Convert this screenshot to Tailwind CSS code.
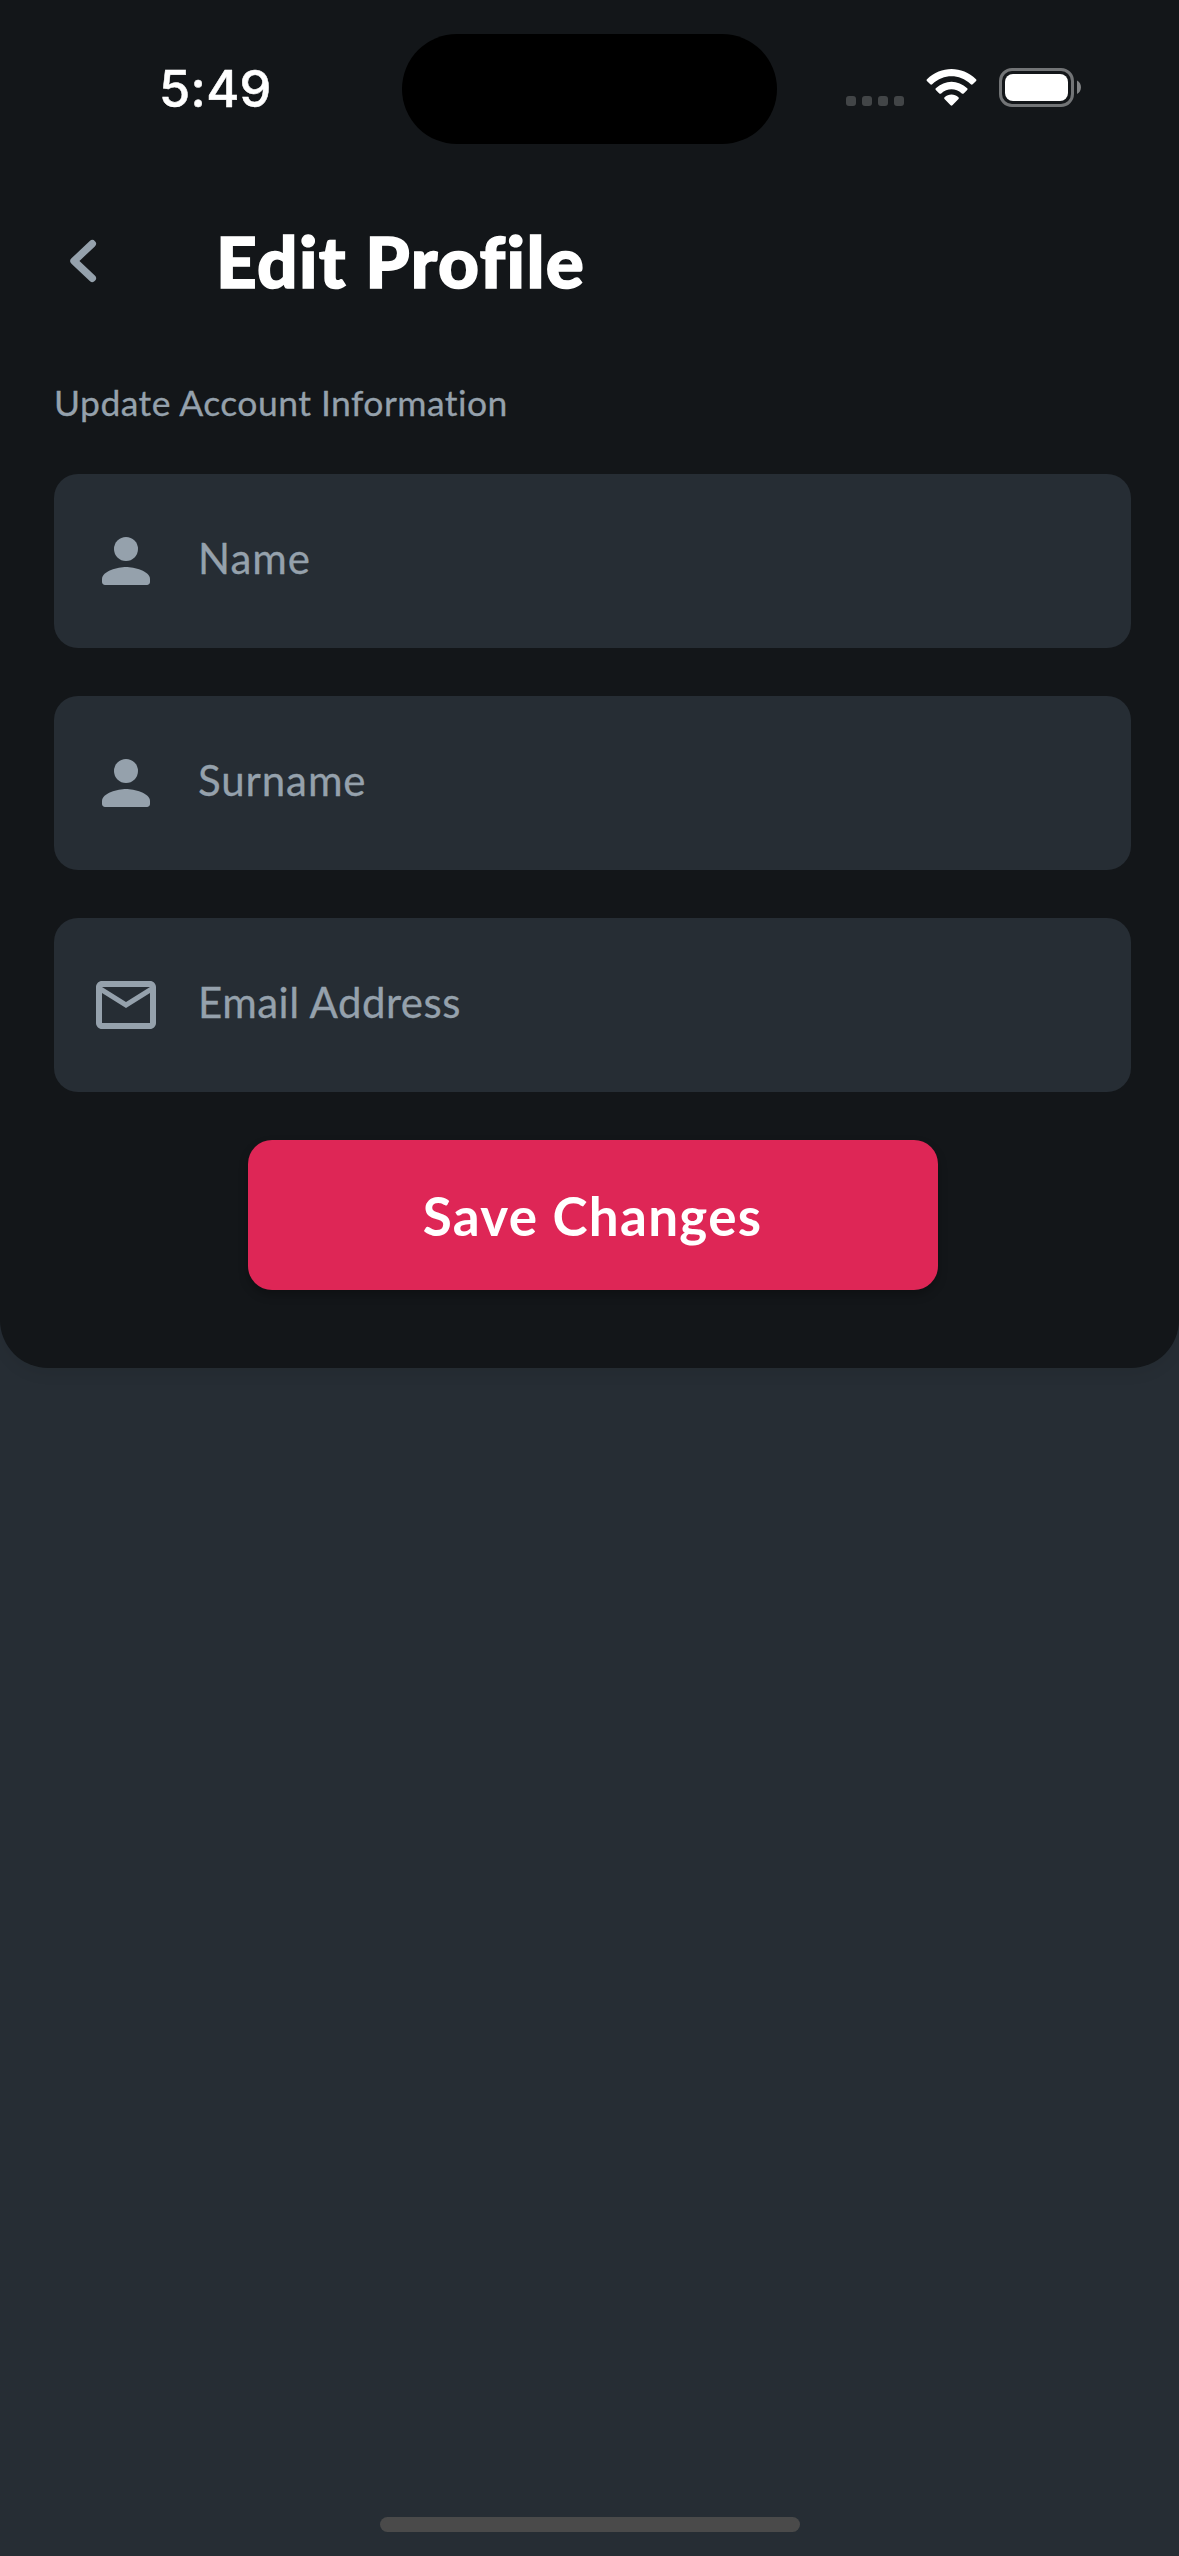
<!DOCTYPE html>
<html lang="en">
<head>
<meta charset="utf-8">
<title>Edit Profile</title>
<script src="https://cdn.jsdelivr.net/npm/@tailwindcss/browser@4"></script>
</head>
<body class="bg-[#262d34]">
<div class="w-[1179px] h-[2556px] flex flex-col justify-between items-center bg-[#262d34] font-['Lato',sans-serif] overflow-hidden">
  <main class="w-full h-[1368px] bg-[#131619] rounded-b-[48px] shadow-[0_6px_15px_rgba(0,0,0,0.06)] flex flex-col">
    <header class="h-[177px] flex shrink-0 pt-[34px]">
      <div class="w-[402px] h-[110px] flex items-center pl-[159px]">
        <time class="text-white text-[50.5px] leading-none font-medium tracking-[0.3px] [-webkit-text-stroke:0.5px_white] font-['Inter',sans-serif]">5:49</time>
      </div>
      <div class="w-[375px] h-[110px] rounded-full bg-black"></div>
      <svg class="w-[402px] h-[110px]" viewBox="777 34 402 110" fill="none">
        <g fill="#424547"><rect x="846" y="96" width="10" height="10" rx="3"/><rect x="862" y="96" width="10" height="10" rx="3"/><rect x="878" y="96" width="10" height="10" rx="3"/><rect x="894" y="96" width="10" height="10" rx="3"/></g>
        <g fill="#fff">
          <path d="M927 79.2Q926 80 926.9 81L930.300 84.300Q931.200 85.100 932.200 84.200C944 73.700 959 73.700 970.800 84.200Q971.800 85.100 972.700 84.300L976.100 81Q977 80 976 79.200C962 65.700 941 65.700 927 79.200Z"/>
          <path d="M935.800 88.200Q934.900 89 935.800 89.900L939.300 93.400Q940.200 94.200 941.200 93.400C947.400 88 955.600 88 961.800 93.400Q962.800 94.200 963.700 93.400L967.200 89.900Q968.100 89 967.200 88.200C958 79.500 945 79.500 935.800 88.200Z"/>
          <path d="M944.600 97.200Q943.600 98 944.500 99L950.600 105.300Q951.500 106.200 952.400 105.300L958.500 99Q959.400 98 958.400 97.200C954.500 93.600 948.500 93.600 944.600 97.200Z"/>
          <rect x="1005" y="74" width="63" height="27" rx="8"/>
        </g>
        <rect x="1000.500" y="69.500" width="72" height="36" rx="11.500" stroke="#727476" stroke-width="3"/>
        <path d="M1077 80.500C1082.300 83 1082.300 91.500 1077 94Z" fill="#818385"/>
      </svg>
    </header>
    <div class="h-[168px] flex shrink-0 items-center">
      <button class="w-[216px] pl-[54px] flex" aria-label="Back">
        <svg class="size-[60px]" viewBox="54 231 60 60" fill="none" stroke="#95a1ac" stroke-width="7.400" stroke-linecap="round" stroke-linejoin="round"><path d="M92.300 243.700L74 261L92.300 278.300"/></svg>
      </button>
      <h1 class="text-white text-[71px] leading-none font-black tracking-[1.4px] [-webkit-text-stroke:1.5px_white] whitespace-nowrap pb-[2px]">Edit Profile</h1>
    </div>
    <div class="px-[54px] h-[129px] shrink-0 pt-[38px]">
      <p class="text-[#95a1ac] text-[35.5px] leading-[40px] tracking-[0.45px] [-webkit-text-stroke:0.3px_#95a1ac]">Update Account Information</p>
    </div>
    <form class="px-[54px] w-[1185px] max-w-[1185px] flex flex-col gap-[48px] items-center shrink-0">
      <label class="w-full h-[174px] rounded-[24px] bg-[#262d34] flex items-center gap-[36px] pl-[36px] text-[#95a1ac] text-[42px] leading-[50px]">
        <svg class="size-[72px]" viewBox="0 0 24 24" fill="currentColor"><circle cx="12" cy="8" r="4"/><path d="M12 14c-2.670 0-8 1.340-8 4v1c0 .550.450 1 1 1h14c.550 0 1-.450 1-1v-1c0-2.660-5.330-4-8-4z"/></svg>
        <span class="pb-[6px] tracking-[1px] [-webkit-text-stroke:0.3px_#95a1ac]">Name</span>
      </label>
      <label class="w-full h-[174px] rounded-[24px] bg-[#262d34] flex items-center gap-[36px] pl-[36px] text-[#95a1ac] text-[42px] leading-[50px]">
        <svg class="size-[72px]" viewBox="0 0 24 24" fill="currentColor"><circle cx="12" cy="8" r="4"/><path d="M12 14c-2.670 0-8 1.340-8 4v1c0 .550.450 1 1 1h14c.550 0 1-.450 1-1v-1c0-2.660-5.330-4-8-4z"/></svg>
        <span class="pb-[6px] tracking-[0.9px] [-webkit-text-stroke:0.3px_#95a1ac]">Surname</span>
      </label>
      <label class="w-full h-[174px] rounded-[24px] bg-[#262d34] flex items-center gap-[36px] pl-[36px] text-[#95a1ac] text-[42px] leading-[50px]">
        <svg class="size-[72px]" viewBox="0 0 24 24" fill="currentColor"><path d="M22 6c0-1.100-.900-2-2-2H4c-1.100 0-2 .900-2 2v12c0 1.100.900 2 2 2h16c1.100 0 2-.900 2-2V6zm-2 0l-8 5-8-5h16zm0 12H4V8l8 5 8-5v10z"/></svg>
        <span class="pb-[6px] tracking-[0.5px] [-webkit-text-stroke:0.3px_#95a1ac]">Email Address</span>
      </label>
      <button type="button" class="w-[690px] h-[150px] rounded-[24px] bg-[#de2656] shadow-[0_5px_10px_rgba(0,0,0,0.25)] text-white text-[53px] font-bold leading-none tracking-[1.3px]">Save Changes</button>
    </form>
  </main>
  <div class="w-[420px] h-[15px] rounded-full bg-[#4a4a4a] mb-[24px]"></div>
</div>
</body>
</html>
